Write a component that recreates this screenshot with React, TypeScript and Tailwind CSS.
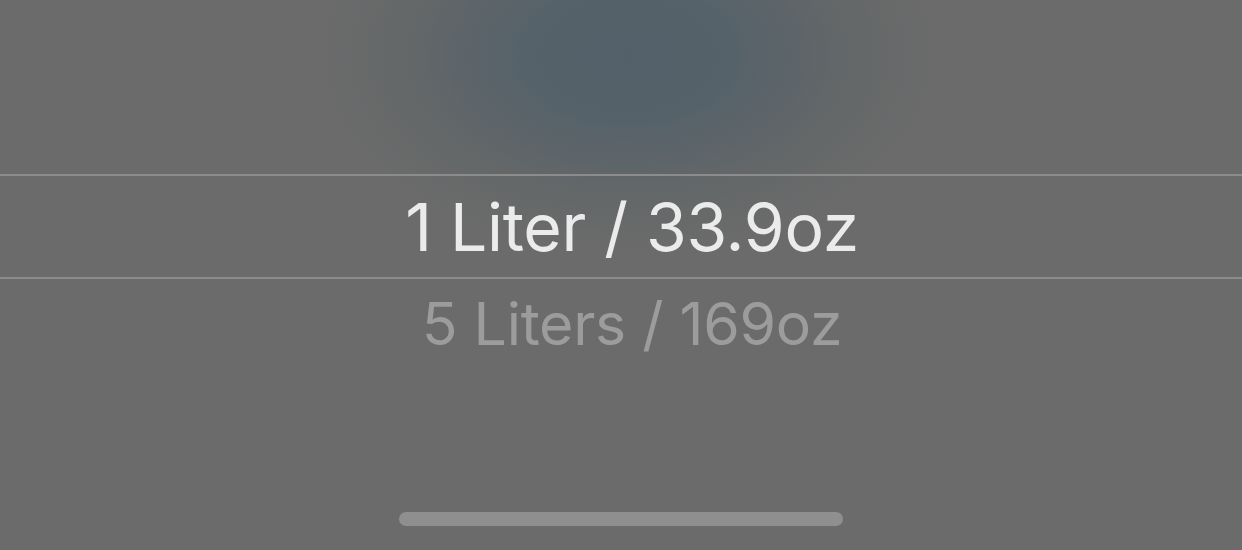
export default function App() {
  return (
    <div
      className="flex h-[550px] w-full flex-col overflow-hidden bg-[#6b6b6b] bg-[radial-gradient(ellipse_310px_195px_at_628px_55px,#536069_0%,#56626a_35%,#636768_70%,#6b6b6b_100%)]"
      style={{ fontFamily: 'Inter, "Noto Sans", sans-serif' }}
    >
      <div className="h-[174px]" />
      <div className="h-[2px] w-full bg-[#8c8c8c]" />
      <div className="flex h-[101px] items-center justify-center pl-[22px]">
        <span className="text-[66px] leading-none tracking-[-0.3px] text-[#ebebeb]">1 Liter / 33.9oz</span>
      </div>
      <div className="h-[2px] w-full bg-[#8c8c8c]" />
      <div className="flex h-[88px] items-center justify-center pl-[22px]">
        <span className="text-[59px] leading-none tracking-[-0.3px] text-[#9c9c9c]">5 Liters / 169oz</span>
      </div>
      <div className="flex-1" />
      <div className="flex justify-center pb-[24px]">
        <div className="h-[14px] w-[444px] rounded-full bg-[#8f8f8f]" />
      </div>
    </div>
  );
}
